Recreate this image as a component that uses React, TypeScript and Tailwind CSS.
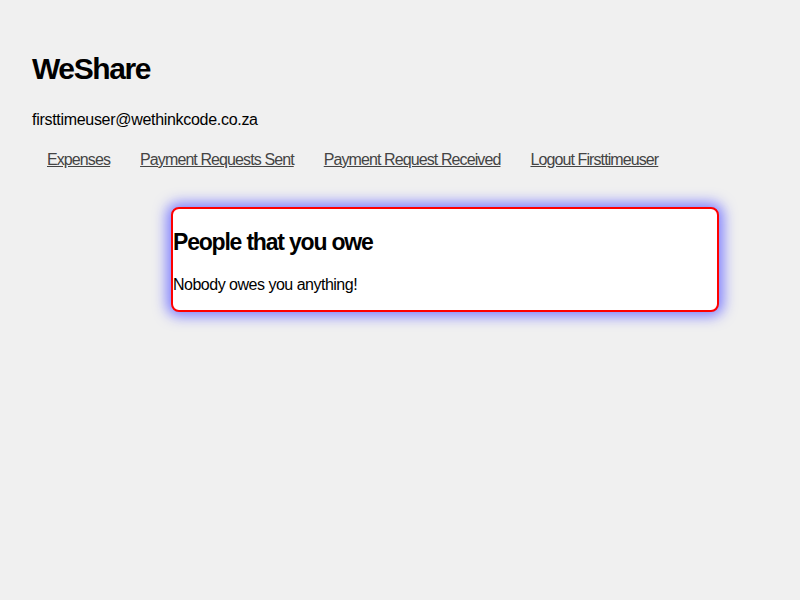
export default function App() {
  const links = ["Expenses", "Payment Requests Sent", "Payment Request Received", "Logout Firsttimeuser"];
  return (
    <div className="min-h-[600px] w-full bg-[#f0f0f0] px-8 pt-[48px] text-black" style={{ fontFamily: '"Liberation Sans", Arial, sans-serif' }}>
      <h1 className="text-[30px] leading-[42px] font-bold tracking-[-1.4px]">WeShare</h1>
      <div className="mt-[20px] text-[16px] leading-[20px] tracking-[-0.3px]">firsttimeuser@wethinkcode.co.za</div>
      <nav className="mt-[20px] flex">
        {links.map((l) => (
          <a key={l} href="#" className="px-[15px] text-[16px] leading-[20px] text-[#444] underline tracking-[-0.9px]">
            {l}
          </a>
        ))}
      </nav>
      <div className="ml-[139px] mt-[37px] w-[548px] rounded-[8px] border-2 border-[#ff0000] bg-white pb-[15px] shadow-[0_0_14px_4px_#7a7aff]">
        <h2 className="mt-[18px] text-[23px] leading-[30px] font-bold tracking-[-1.2px]">People that you owe</h2>
        <p className="mt-[18px] text-[16px] leading-[20px] tracking-[-0.5px]">Nobody owes you anything!</p>
      </div>
    </div>
  );
}
